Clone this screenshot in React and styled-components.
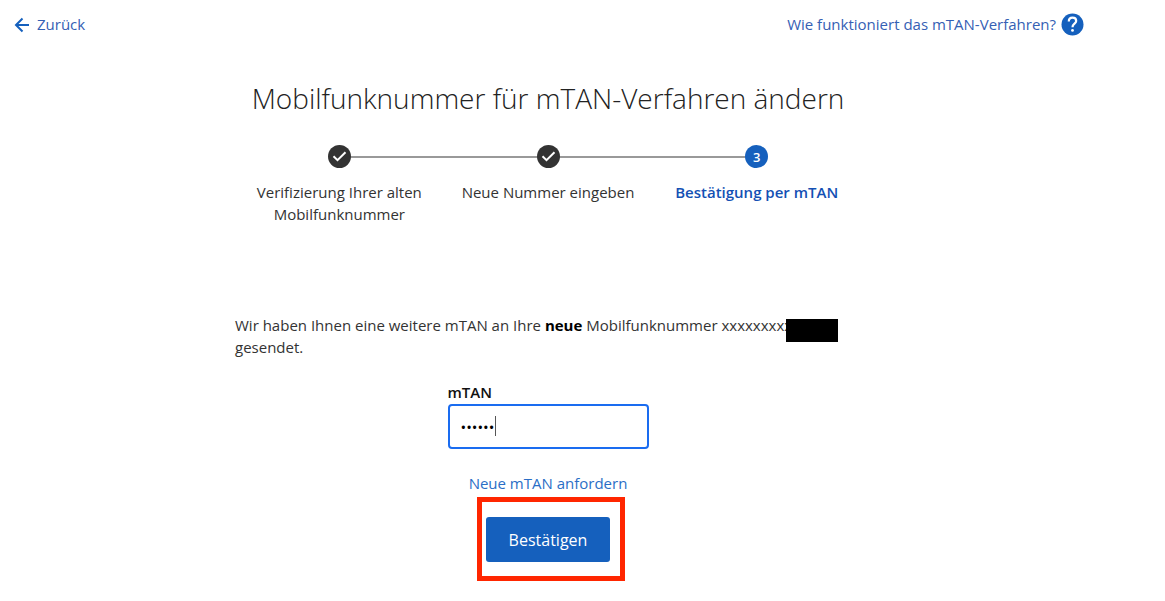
import React, { useState } from "react";
import styled, { createGlobalStyle } from "styled-components";

const GlobalStyle = createGlobalStyle`
  *, *::before, *::after { box-sizing: border-box; }
  body {
    margin: 0;
    background: #fff;
    color: #333;
    font: 400 15px/22px "Open Sans", "Noto Sans", sans-serif;
  }
  button, input { font: inherit; }
`;

const Page = styled.div`
  padding-right: 69px;
`;

const TopBar = styled.header`
  display: flex;
  align-items: center;
  justify-content: space-between;
  height: 48px;
  padding: 0 12px;
`;

const Link = styled.a`
  display: inline-flex;
  align-items: flex-start;
  gap: 5px;
  color: ${(p) => (p.$bright ? "#2a6ec6" : "#3560b4")};
  text-decoration: none;
`;

const Main = styled.main`
  display: flex;
  flex-direction: column;
  align-items: center;
  padding-top: 31px;
`;

const Title = styled.h1`
  margin: 0;
  color: #222;
  font-size: 28px;
  font-weight: 300;
  line-height: 38px;
  text-align: center;
`;

const Steps = styled.ol`
  display: flex;
  width: 100%;
  max-width: 626px;
  min-height: 197px;
  margin: 0;
  padding: 28px 0 0;
  list-style: none;
`;

const Step = styled.li`
  position: relative;
  display: flex;
  flex: 1 1 0;
  flex-direction: column;
  align-items: center;
  gap: 13px;
  padding: 0 16px;
  color: ${(p) => (p.$active ? "#1450b4" : "#333")};
  font-weight: ${(p) => (p.$active ? 600 : 400)};
  text-align: center;

  &:not(:first-child)::before {
    content: "";
    position: absolute;
    top: 11px;
    right: 50%;
    width: 100%;
    height: 2px;
    background: #999;
  }
`;

const Marker = styled.span`
  z-index: 1;
  display: flex;
  align-items: center;
  justify-content: center;
  width: 23px;
  height: 23px;
  border-radius: 50%;
  background: ${(p) => (p.$active ? "#1560bd" : "#333")};
  color: #fff;
  font-size: 13px;
  line-height: 20px;
`;

const Message = styled.p`
  width: 100%;
  max-width: 626px;
  margin: 0 0 23px;

  strong { color: #000; font-weight: 700; }
`;

const PhoneNumber = styled.span`
  position: relative;
  padding-right: 46px;
`;

const Redaction = styled.span`
  position: absolute;
  top: 4px;
  right: 0;
  width: 52px;
  height: 23px;
  background: #000;
`;

const Form = styled.form`
  display: flex;
  flex-direction: column;
  align-items: center;
`;

const Field = styled.div`
  position: relative;
  width: 201px;
  margin-bottom: 23px;
`;

const Label = styled.label`
  display: block;
  margin-bottom: 1px;
  color: #111;
  font-weight: 600;
`;

const Input = styled.input`
  display: block;
  width: 100%;
  height: 45px;
  padding: 0 11px;
  border: 2px solid #1a6cf0;
  border-radius: 4px;
  outline: none;
  background: #fff;
  color: #000;
  caret-color: transparent;
`;

const Caret = styled.span`
  position: absolute;
  bottom: 13px;
  left: 47px;
  width: 1px;
  height: 20px;
  background: #555;
`;

const Submit = styled.button`
  width: 124px;
  height: 45px;
  border: 0;
  border-radius: 3px;
  background: #1560bd;
  color: #fff;
  font-size: 16px;
  font-weight: 500;
`;

const Highlighted = styled.div`
  position: relative;
  display: flex;
  margin: 23px 0 20px;
`;

const HighlightFrame = styled.span`
  position: absolute;
  inset: -20px -15px -19px -9px;
  border: 5px solid #ff2600;
  pointer-events: none;
`;

const ArrowLeft = () => (
  <svg width="20" height="23" viewBox="0 0 20 23" fill="none" stroke="#1560bd" strokeWidth="2" aria-hidden="true">
    <path d="M17 12H4.5M10.5 5.5L4 12L10.5 18.5" />
  </svg>
);

const Help = () => (
  <svg width="23" height="23" viewBox="0 0 23 23" fill="none" aria-hidden="true">
    <circle cx="11.5" cy="11.5" r="11" fill="#1560bd" />
    <path d="M7.8 8.4C7.8 6.2 9.3 4.7 11.5 4.7C13.7 4.7 15.2 6.1 15.2 8C15.2 10.7 11.5 10.8 11.5 14.2" stroke="#fff" strokeWidth="2.2" />
    <circle cx="11.5" cy="17.4" r="1.4" fill="#fff" />
  </svg>
);

const Check = () => (
  <svg width="23" height="23" viewBox="0 0 23 23" fill="none" role="img" aria-label="Erledigt">
    <path d="M5.5 11.3L9.5 15.2L17.5 7.3" stroke="#fff" strokeWidth="2" />
  </svg>
);

const steps = [
  { label: "Verifizierung Ihrer alten Mobilfunknummer", done: true },
  { label: "Neue Nummer eingeben", done: true },
  { label: "Bestätigung per mTAN", done: false },
];

export default function App() {
  const [tan, setTan] = useState("123456");

  return (
    <Page>
      <GlobalStyle />
      <TopBar>
        <Link href="#zurueck"><ArrowLeft />Zurück</Link>
        <Link href="#hilfe">Wie funktioniert das mTAN-Verfahren?<Help /></Link>
      </TopBar>
      <Main>
        <Title>Mobilfunknummer für mTAN-Verfahren ändern</Title>
        <Steps>
          {steps.map((step, i) => (
            <Step key={step.label} $active={!step.done} aria-current={step.done ? undefined : "step"}>
              <Marker $active={!step.done}>{step.done ? <Check /> : i + 1}</Marker>
              {step.label}
            </Step>
          ))}
        </Steps>
        <Message>
          Wir haben Ihnen eine weitere mTAN an Ihre <strong>neue</strong> Mobilfunknummer{" "}
          <PhoneNumber>xxxxxxxxx<Redaction /></PhoneNumber> gesendet.
        </Message>
        <Form onSubmit={(e) => e.preventDefault()}>
          <Field>
            <Label htmlFor="mtan">mTAN</Label>
            <Input id="mtan" type="password" autoComplete="off" value={tan} onChange={(e) => setTan(e.target.value)} />
            {tan.length === 6 && <Caret />}
          </Field>
          <Link $bright href="#neue-mtan">Neue mTAN anfordern</Link>
          <Highlighted>
            <Submit type="submit">Bestätigen</Submit>
            <HighlightFrame />
          </Highlighted>
        </Form>
      </Main>
    </Page>
  );
}
